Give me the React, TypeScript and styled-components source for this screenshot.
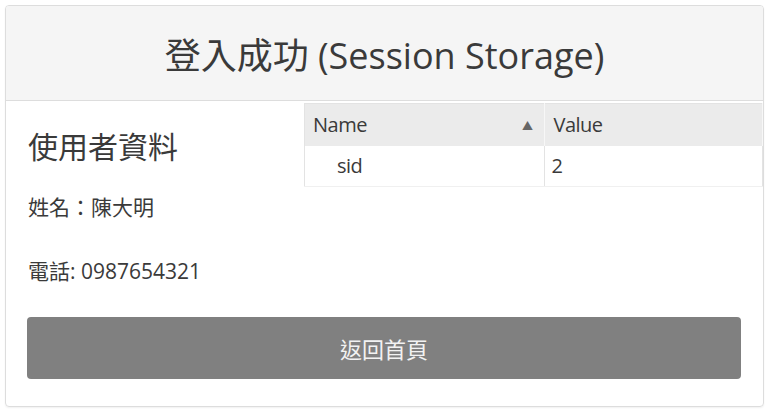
import React from 'react';
import styled, { createGlobalStyle } from 'styled-components';

const GlobalStyle = createGlobalStyle`
    body {
        margin: 0;
        background: #ffffff;
        font-family: "Open Sans", "Noto Sans CJK TC", sans-serif;
        color: #3a3a3a;
    }
`;

const Page = styled.div`
    padding: 5px;
`;

const Card = styled.div`
    width: 759px;
    box-sizing: border-box;
    border: 1px solid #dddddd;
    border-radius: 4px;
    box-shadow: 0 1px 2px rgba(0, 0, 0, 0.06);
    overflow: hidden;
`;

const Header = styled.div`
    height: 94px;
    background: #f5f5f5;
    border-bottom: 1px solid #dddddd;
    display: flex;
    align-items: center;
    justify-content: center;
`;

const Title = styled.h1`
    margin: 0;
    font-size: 36px;
    font-weight: 400;
    color: #3a3a3a;
`;

const Body = styled.div`
    display: grid;
    grid-template-columns: 1fr 459px;
`;

const Info = styled.div`
    padding: 28px 0 0 22px;
`;

const SubTitle = styled.h3`
    margin: 0;
    font-size: 30px;
    line-height: 36px;
    font-weight: 400;
`;

const Field = styled.p<{ gap: number }>`
    margin: ${({ gap }) => gap}px 0 0;
    font-size: 21px;
    line-height: 28px;
`;

const Grid = styled.table`
    align-self: start;
    margin-top: 2px;
    width: 459px;
    border-collapse: collapse;
    border-left: 1px solid #e3e3e3;
    font-size: 20px;
    letter-spacing: -0.5px;
`;

const HeadCell = styled.th<{ w: number }>`
    width: ${({ w }) => w}px;
    height: 42px;
    padding: 0 8px;
    background: #ebebeb;
    border-top: 1px solid #e3e3e3;
    border-right: 1px solid #f7f7f7;
    font-weight: 400;
    text-align: left;
    box-sizing: border-box;
`;

const HeadInner = styled.div`
    display: flex;
    align-items: center;
    justify-content: space-between;
`;

const SortArrow = styled.span`
    font-size: 11px;
    color: #666666;
    margin-right: 4px;
`;

const Cell = styled.td<{ indent: number }>`
    height: 40px;
    padding: 0 0 0 ${({ indent }) => indent}px;
    border-right: 1px solid #e3e3e3;
    border-bottom: 1px solid #f0f0f0;
`;

const Footer = styled.div`
    padding: 32px 22px 27px 21px;
`;

const BackButton = styled.button`
    width: 100%;
    height: 62px;
    border: none;
    border-radius: 4px;
    background: #808080;
    color: #f2f2f2;
    font-family: "Open Sans", "Noto Sans CJK TC", sans-serif;
    font-size: 22px;
    cursor: pointer;
`;

export default function App() {
    return (
        <Page>
            <GlobalStyle />
            <Card>
                <Header>
                    <Title>登入成功 (Session Storage)</Title>
                </Header>
                <Body>
                    <Info>
                        <SubTitle>使用者資料</SubTitle>
                        <Field gap={28}>姓名：陳大明</Field>
                        <Field gap={36}>電話: 0987654321</Field>
                    </Info>
                    <Grid>
                        <thead>
                            <tr>
                                <HeadCell w={241}>
                                    <HeadInner>
                                        Name <SortArrow>▲</SortArrow>
                                    </HeadInner>
                                </HeadCell>
                                <HeadCell w={218}>Value</HeadCell>
                            </tr>
                        </thead>
                        <tbody>
                            <tr>
                                <Cell indent={32}>sid</Cell>
                                <Cell indent={6}>2</Cell>
                            </tr>
                        </tbody>
                    </Grid>
                </Body>
                <Footer>
                    <BackButton>返回首頁</BackButton>
                </Footer>
            </Card>
        </Page>
    );
}
